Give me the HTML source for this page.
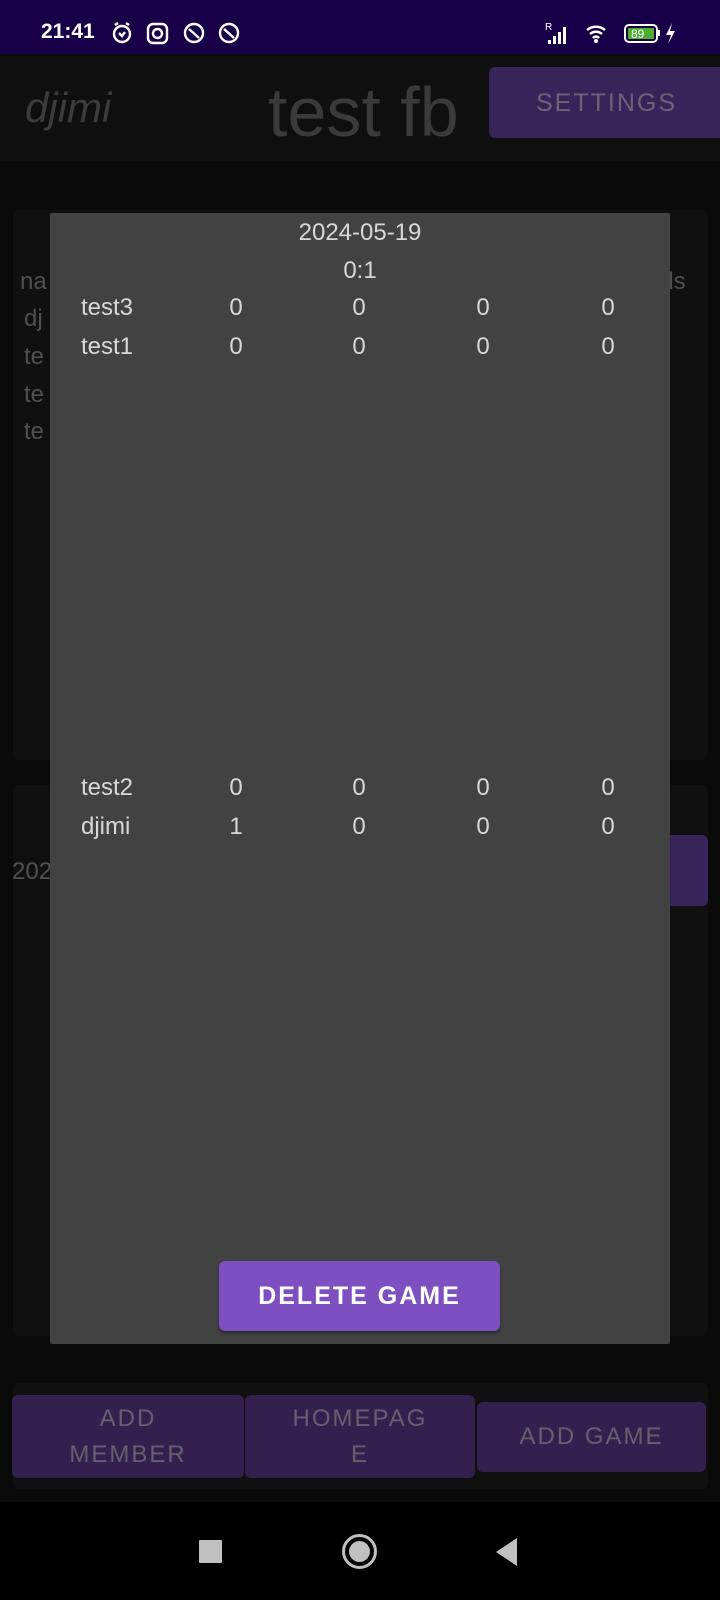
<!DOCTYPE html>
<html><head><meta charset="utf-8"><style>
*{margin:0;padding:0;box-sizing:border-box}
body{width:720px;height:1600px;background:#0a0a0a;position:relative;overflow:hidden;font-family:"Liberation Sans",sans-serif}
.a{position:absolute}
.t{position:absolute;white-space:nowrap}
.btn{position:absolute;background:#33204f;border-radius:6px;color:#66606e;font-size:24px;letter-spacing:2px;text-align:center;display:flex;align-items:center;justify-content:center;line-height:36px}
.c{color:#d8d8d8;font-size:24px;position:absolute;transform:translateX(-50%)}
.n{color:#d8d8d8;font-size:24px;position:absolute}
</style></head><body>
<div class="a" style="left:0;top:0;width:720px;height:54px;background:#170048"></div>
<div class="t" style="left:41px;top:20px;color:#fff;font-size:21px;font-weight:bold">21:41</div>
<svg class="a" style="left:110px;top:20px" width="140" height="26" viewBox="0 0 140 26" fill="none" stroke="#fff" stroke-width="2.4">
<circle cx="12" cy="14" r="8"/><path d="M9 13l3 3 3-4M5 5l3-2M19 5l-3-2"/>
<rect x="38" y="4" width="19" height="19" rx="5"/><circle cx="47.5" cy="13.5" r="4.5"/>
<circle cx="84" cy="13" r="9"/><path d="M79 9l10 9"/>
<circle cx="119" cy="13" r="9"/><path d="M114 9l10 9"/>
</svg>
<svg class="a" style="left:545px;top:20px" width="150" height="26" viewBox="0 0 150 26">
<text x="0" y="10" fill="#fff" font-size="10" font-family="Liberation Sans">R</text>
<path d="M3 24h3v-4h-3zM8 24h3v-8h-3zM13 24h3v-12h-3zM18 24h3v-17h-3z" fill="#fff"/>
<path d="M42 10a14 14 0 0 1 18 0M45 14a9 9 0 0 1 12 0M48 18a4 4 0 0 1 6 0" stroke="#fff" stroke-width="2.5" fill="none"/><circle cx="51" cy="21" r="2" fill="#fff"/>
<rect x="80" y="5" width="32" height="17" rx="4" stroke="#fff" stroke-width="2" fill="none"/><rect x="83" y="8" width="26" height="11" fill="#4caf2f"/>
<text x="86" y="18" fill="#fff" font-size="12" font-family="Liberation Sans">89</text>
<rect x="113" y="10" width="2" height="6" fill="#fff"/>
<path d="M127 3l-6 12h5l-3 9 7-13h-5z" fill="#fff"/>
</svg>
<div class="a" style="left:0;top:56px;width:720px;height:105px;background:#0f0f0f"></div>
<div class="t" style="left:25px;top:84px;color:#3c3c3c;font-size:42px;font-style:italic">djimi</div>
<div class="t" style="left:268px;top:72px;color:#3a3a3a;font-size:70px">test fb</div>
<div class="btn" style="left:489px;top:67px;width:235px;height:71px;background:#36245a;font-size:25px;color:#6a6474">SETTINGS</div>
<div class="a" style="left:13px;top:210px;width:695px;height:550px;background:#101010;border-radius:6px"></div>
<div class="t" style="left:20px;top:268px;color:#505050;font-size:24px">na</div>
<div class="t" style="left:24px;top:305px;color:#505050;font-size:24px">dj</div>
<div class="t" style="left:24px;top:343px;color:#505050;font-size:24px">te</div>
<div class="t" style="left:24px;top:381px;color:#505050;font-size:24px">te</div>
<div class="t" style="left:24px;top:418px;color:#505050;font-size:24px">te</div>
<div class="t" style="left:655px;top:268px;color:#505050;font-size:24px">als</div>
<div class="a" style="left:13px;top:785px;width:695px;height:551px;background:#101010;border-radius:6px"></div>
<div class="t" style="left:12px;top:858px;color:#505050;font-size:24px">2024</div>
<div class="a" style="left:660px;top:835px;width:48px;height:71px;background:#36245a;border-radius:6px"></div>
<div class="a" style="left:50px;top:213px;width:620px;height:1131px;background:#424242;border-radius:2px"></div>
<div class="c" style="left:360px;top:219px">2024-05-19</div>
<div class="c" style="left:360px;top:257px">0:1</div>
<div class="n" style="left:81px;top:294px">test3</div>
<div class="n" style="left:81px;top:333px">test1</div>
<div class="n" style="left:81px;top:774px">test2</div>
<div class="n" style="left:81px;top:813px">djimi</div>
<div class="c" style="left:236px;top:294px">0</div><div class="c" style="left:359px;top:294px">0</div><div class="c" style="left:483px;top:294px">0</div><div class="c" style="left:608px;top:294px">0</div>
<div class="c" style="left:236px;top:333px">0</div><div class="c" style="left:359px;top:333px">0</div><div class="c" style="left:483px;top:333px">0</div><div class="c" style="left:608px;top:333px">0</div>
<div class="c" style="left:236px;top:774px">0</div><div class="c" style="left:359px;top:774px">0</div><div class="c" style="left:483px;top:774px">0</div><div class="c" style="left:608px;top:774px">0</div>
<div class="c" style="left:236px;top:813px">1</div><div class="c" style="left:359px;top:813px">0</div><div class="c" style="left:483px;top:813px">0</div><div class="c" style="left:608px;top:813px">0</div>
<div class="btn" style="left:219px;top:1261px;width:281px;height:70px;background:#7e4fc0;color:#fff;font-weight:bold;font-size:25px;letter-spacing:2px;box-shadow:0 2px 3px rgba(0,0,0,.4)">DELETE GAME</div>
<div class="a" style="left:13px;top:1383px;width:695px;height:106px;background:#101010;border-radius:6px"></div>
<div class="btn" style="left:12px;top:1395px;width:232px;height:83px">ADD<br>MEMBER</div>
<div class="btn" style="left:245px;top:1395px;width:230px;height:83px">HOMEPAG<br>E</div>
<div class="btn" style="left:477px;top:1402px;width:229px;height:70px">ADD GAME</div>
<div class="a" style="left:0;top:1502px;width:720px;height:98px;background:#000"></div>
<div class="a" style="left:199px;top:1540px;width:23px;height:23px;background:#c0c0c0;border-radius:1px"></div>
<div class="a" style="left:342px;top:1534px;width:35px;height:35px;border:3px solid #c0c0c0;border-radius:50%"></div>
<div class="a" style="left:349px;top:1541px;width:21px;height:21px;background:#c0c0c0;border-radius:50%"></div>
<svg class="a" style="left:494px;top:1536px" width="24" height="32"><path d="M23 2v28L2 16z" fill="#c0c0c0"/></svg>
</body></html>
